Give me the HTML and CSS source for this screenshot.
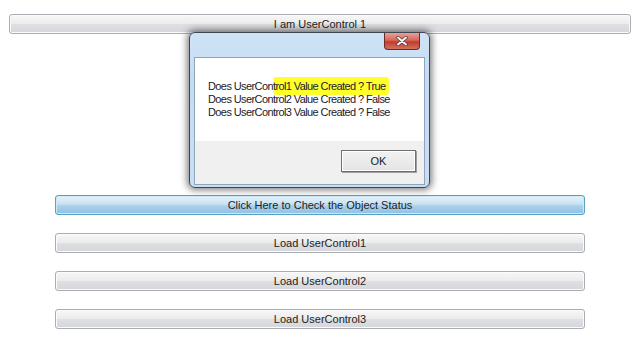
FILE: index.html
```html
<!DOCTYPE html>
<html>
<head>
<meta charset="utf-8">
<link rel="stylesheet" href="styles.css">
</head>
<body>
<div class="page">
  <div class="top-row"><button class="btn wide">I am UserControl 1</button></div>
  <div class="stack">
    <button class="btn blue">Click Here to Check the Object Status</button>
    <button class="btn">Load UserControl1</button>
    <button class="btn">Load UserControl2</button>
    <button class="btn">Load UserControl3</button>
  </div>
  <div class="dialog">
    <div class="titlebar">
      <div class="close"><svg width="14" height="10" viewBox="0 0 14 10"><path d="M3 1.5 L11 8.5 M11 1.5 L3 8.5" stroke="#5a3a3a" stroke-width="3.4" stroke-linecap="round"/><path d="M3 1.5 L11 8.5 M11 1.5 L3 8.5" stroke="#fff" stroke-width="1.8" stroke-linecap="round"/></svg></div>
    </div>
    <div class="panel">
      <div class="msg">
        <div class="line">Does UserCon<span class="hl">trol1 Value Created ? True</span></div>
        <div class="line">Does UserControl2 Value Created ? False</div>
        <div class="line">Does UserControl3 Value Created ? False</div>
      </div>
      <div class="foot"><button class="ok">OK</button></div>
    </div>
  </div>
</div>
</body>
</html>
```

FILE: styles.css
```css
html, body { margin: 0; padding: 0; background: #fff; }
body { font-family: "Liberation Sans", sans-serif; font-size: 11px; color: #1e1e1e; }
.page { position: relative; width: 640px; height: 340px; overflow: hidden; }
.top-row { padding: 14px 9px 0 9px; }
.btn {
  display: block; width: 100%; height: 20px; margin: 0; padding: 0;
  font: inherit; color: #222;
  border: 1px solid #a9adb3; border-radius: 3px;
  background: linear-gradient(#f7f7f7 0%, #ececec 48%, #dedfe2 52%, #d6d7da 100%);
  box-shadow: inset 0 0 0 1px #fbfbfb;
}
.stack { padding: 161px 55px 0 55px; display: flex; flex-direction: column; gap: 18px; }
.stack .btn { height: 20px; }
.btn.blue {
  border-color: #5a9fc4;
  background: linear-gradient(#e6f2fa 0%, #c8e2f3 45%, #a9d0ec 55%, #8fc1e5 100%);
  box-shadow: inset 0 0 0 1px #cfe8f6;
  height: 20px;
}
.dialog {
  position: absolute; left: 189px; top: 32px; width: 239px; height: 154px;
  border: 1px solid #3d4650; border-radius: 6px;
  background: linear-gradient(180deg, #cfe3f6 0%, #c4dcf2 30%, #c9def3 100%);
  box-shadow: 0 0 7px 2px rgba(0,0,0,0.5);
  box-sizing: content-box;
}
.titlebar { height: 24px; position: relative; }
.close {
  position: absolute; right: 9px; top: 0; width: 36px; height: 17px;
  border: 1px solid #6b2a24; border-top: none; border-radius: 0 0 4px 4px;
  background: linear-gradient(#e8a196 0%, #d8675a 45%, #c23c2b 55%, #d2705c 100%);
  display: flex; align-items: center; justify-content: center; box-sizing: border-box;
}
.panel {
  margin: 0 4px; height: 126px; border: 1px solid #8ea5bd; background: #f0f0f0;
  display: flex; flex-direction: column;
}
.msg { background: #fff; height: 83px; padding: 22px 0 0 13px; box-sizing: border-box; letter-spacing: -0.6px; }
.line { height: 13px; line-height: 13px; white-space: nowrap; color: #1a1a2a; }
.hl { background: #ffff2a; padding: 1px 3px 1px 0; box-shadow: 0 -2px 0 #ffff2a, 0 2px 0 #ffff2a; border-radius: 3px; }
.foot { flex: 1; display: flex; justify-content: flex-end; align-items: flex-start; padding: 9px 8px 0 0; }
.ok {
  width: 75px; height: 22px; margin: 0; padding: 0; font: inherit; font-size: 11px; color: #1a1a2a;
  border: 1px solid #707070; background: linear-gradient(#f2f2f2, #e4e4e4);
  box-shadow: inset 0 0 0 1px #fff, 1px 1px 0 #a0a0a0;
}
```
